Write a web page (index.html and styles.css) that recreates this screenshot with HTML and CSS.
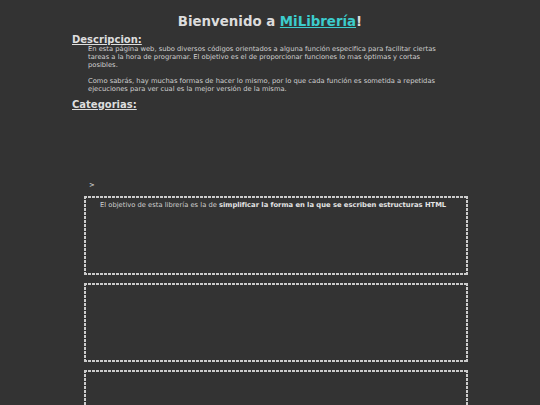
FILE: index.html
```html
<!DOCTYPE html>
<html lang="es">
<head>
<meta charset="utf-8">
<title>MiLibrería</title>
<link rel="stylesheet" href="styles.css">
</head>
<body>
<header class="header">
  <h1 class="title">Bienvenido a <a class="brand" href="#">MiLibrería</a>!</h1>
</header>
<main class="page">
  <h2 class="section-title">Descripcion:</h2>
  <div class="desc">
    <p>En esta página web, subo diversos códigos orientados a alguna función especifica para facilitar ciertas tareas a la hora de programar. El objetivo es el de proporcionar funciones lo mas óptimas y cortas posibles.</p>
    <p>Como sabrás, hay muchas formas de hacer lo mismo, por lo que cada función es sometida a repetidas ejecuciones para ver cual es la mejor versión de la misma.</p>
  </div>
  <h2 class="section-title categories-title">Categorias:</h2>
  <div class="categories">
    <div class="crumb">&gt;</div>
    <div class="box">
      <p class="box-text">El objetivo de esta librería es la de <strong>simplificar la forma en la que se escriben estructuras HTML</strong></p>
    </div>
    <div class="box"></div>
    <div class="box"></div>
  </div>
</main>
</body>
</html>
```
FILE: styles.css
```css
html, body {
  margin: 0;
  padding: 0;
  background: #333333;
}
body {
  font-family: "DejaVu Sans", Verdana, sans-serif;
  color: #d0d0d0;
  -webkit-font-smoothing: antialiased;
}
.header {
  padding-top: 14px;
}
.title {
  margin: 0;
  text-align: center;
  font-size: 13.33px;
  line-height: 16px;
  color: #dcdcdc;
}
.brand {
  color: #3ccccc;
  text-decoration: underline;
}
.page {
  padding: 0 72px;
}
.section-title {
  margin: 5px 0 0 0;
  font-size: 10px;
  line-height: 10px;
  text-decoration: underline;
  color: #dedede;
}
.categories-title {
  margin-top: 6.5px;
}
.desc {
  padding: 0 24px 0 16px;
  font-size: 6.75px;
  line-height: 8.2px;
  color: #d0d0d0;
}
.desc p {
  margin: 0;
}
.desc p + p {
  margin-top: 7px;
}
.categories {
  padding-left: 12px;
  padding-top: 71.5px;
  width: 384px;
}
.crumb {
  font-size: 6.75px;
  line-height: 8.2px;
  padding-left: 5px;
  margin-bottom: 6.8px;
  color: #d0d0d0;
}
.box {
  box-sizing: border-box;
  height: 78.5px;
  padding: 2px;
  margin-bottom: 8.5px;
  background:
    repeating-linear-gradient(90deg, #cccccc 0 3px, transparent 3px 4px) left top / 100% 2px no-repeat,
    repeating-linear-gradient(90deg, #cccccc 0 3px, transparent 3px 4px) left bottom / 100% 2px no-repeat,
    repeating-linear-gradient(180deg, #cccccc 0 3px, transparent 3px 4px) left top / 2px 100% no-repeat,
    repeating-linear-gradient(180deg, #cccccc 0 3px, transparent 3px 4px) right top / 2px 100% no-repeat;
}
.box-text {
  margin: 2.6px 0 0 14px;
  font-size: 6.75px;
  line-height: 8.2px;
  color: #d0d0d0;
}
.box-text strong {
  color: #e4e4e4;
}
```
